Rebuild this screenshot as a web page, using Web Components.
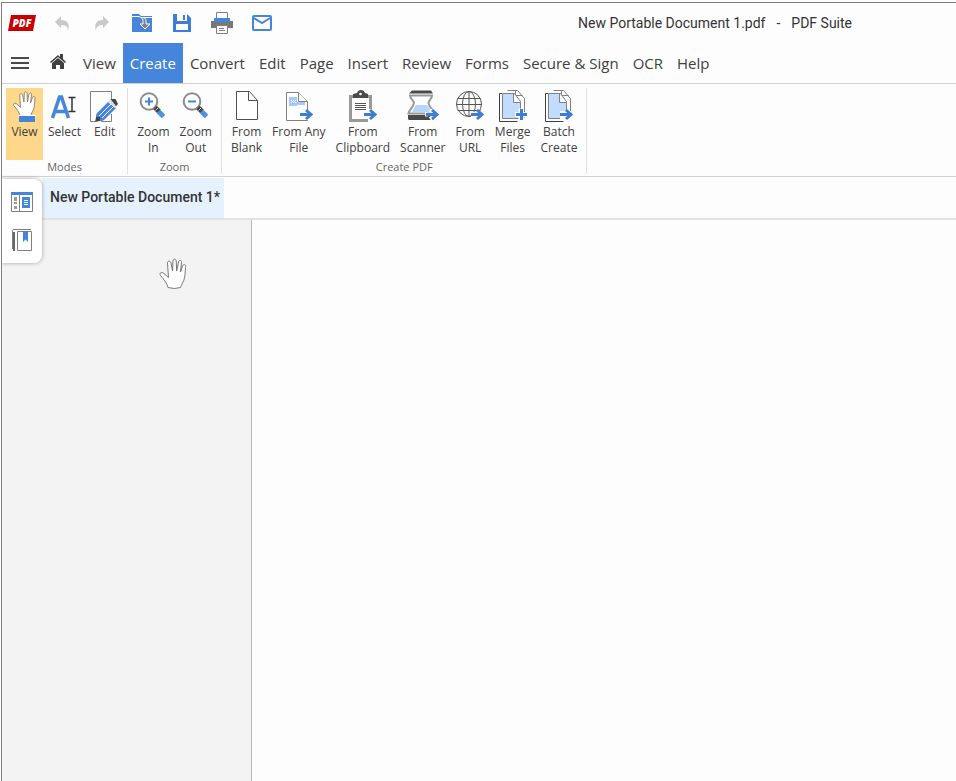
<!DOCTYPE html>
<html lang="en">
<head>
<meta charset="utf-8">
<meta name="viewport" content="width=device-width, initial-scale=1">
<title>New Portable Document 1.pdf - PDF Suite</title>
<style>
  html, body {
    height: 100%;
    margin: 0;
  }

  body {
    background: #fdfdfd;
    color: #404040;
    font-family: "Open Sans", "Noto Sans", sans-serif;
  }
</style>
</head>
<body>

<app-window>
  <title-bar slot="title" document="New Portable Document 1.pdf" app="PDF Suite">
    <icon-button icon="logo" label="PDF Suite"></icon-button>
    <icon-button icon="undo" label="Undo"></icon-button>
    <icon-button icon="redo" label="Redo"></icon-button>
    <icon-button icon="open" label="Open"></icon-button>
    <icon-button icon="save" label="Save"></icon-button>
    <icon-button icon="print" label="Print"></icon-button>
    <icon-button icon="mail" label="Send by email"></icon-button>
  </title-bar>

  <menu-bar slot="menu">
    <icon-button icon="menu" label="Menu"></icon-button>
    <icon-button icon="home" label="Home"></icon-button>
    <menu-tab>View</menu-tab>
    <menu-tab active>Create</menu-tab>
    <menu-tab>Convert</menu-tab>
    <menu-tab>Edit</menu-tab>
    <menu-tab>Page</menu-tab>
    <menu-tab>Insert</menu-tab>
    <menu-tab>Review</menu-tab>
    <menu-tab>Forms</menu-tab>
    <menu-tab>Secure &amp; Sign</menu-tab>
    <menu-tab>OCR</menu-tab>
    <menu-tab>Help</menu-tab>
  </menu-bar>

  <ribbon-bar slot="ribbon">
    <ribbon-group label="Modes">
      <ribbon-button icon="view" active>View</ribbon-button>
      <ribbon-button icon="select">Select</ribbon-button>
      <ribbon-button icon="edit">Edit</ribbon-button>
    </ribbon-group>
    <ribbon-group label="Zoom">
      <ribbon-button icon="zoomIn">Zoom<br>In</ribbon-button>
      <ribbon-button icon="zoomOut">Zoom<br>Out</ribbon-button>
    </ribbon-group>
    <ribbon-group label="Create PDF">
      <ribbon-button icon="blank">From<br>Blank</ribbon-button>
      <ribbon-button icon="anyFile">From Any<br>File</ribbon-button>
      <ribbon-button icon="clipboard">From<br>Clipboard</ribbon-button>
      <ribbon-button icon="scanner">From<br>Scanner</ribbon-button>
      <ribbon-button icon="url">From<br>URL</ribbon-button>
      <ribbon-button icon="merge">Merge<br>Files</ribbon-button>
      <ribbon-button icon="batch">Batch<br>Create</ribbon-button>
    </ribbon-group>
  </ribbon-bar>

  <document-tab slot="tabs">New Portable Document 1*</document-tab>

  <side-dock slot="dock">
    <icon-button icon="thumbnails" label="Page thumbnails"></icon-button>
    <icon-button icon="bookmarks" label="Bookmarks"></icon-button>
  </side-dock>

  <hand-cursor slot="canvas"></hand-cursor>
</app-window>

<script>
const BLUE = '#4586dc';
const GREY = '#808080';
const DARK = '#404040';

const HAND = 'M8.5 29.5C7.500 25 4 21 1 17.500C-.5 15 2 13.500 4.500 15.500L9 19.500L8 5C8 2.500 11 2.500 11.500 5L13 13L13.500 3C13.500 .5 16.500 .5 16.700 3L17.200 13L19 4C19.500 1.500 22.500 2 22 4.500L21 14L23 8C24 5.500 27 6.500 26 9.500C25.500 17 25.500 20 23.500 24C22 27 21.500 28 21 29.500Q15 31.500 8.500 29.500Z';

const ARROW = `<path d="M18 24.500h10M24 20l5 4.500-5 4.500" fill="none" stroke="#3d7dd6" stroke-width="3"/>`;

const PAGES = `
  <path d="M11.500 .5h10l7 8v19" fill="#fff" stroke="${GREY}"/>
  <path d="M19.500 .5v5h7" fill="none" stroke="${GREY}"/>
  <path d="M6 3.500H3.500v28h18" fill="none" stroke="${DARK}"/>
  <path d="M6.500 3.500h12l6 8v17h-18z" fill="#c2dcff" stroke="${GREY}"/>
  <path d="M17.500 3.500v9h7" fill="#fff" stroke="${GREY}"/>`;

const lens = sign => `
  <circle cx="13" cy="11.500" r="8.300" fill="#fff" stroke="#8c8c8c" stroke-width="2"/>
  <path d="M9 11.500h8${sign}" stroke="${BLUE}" stroke-width="2"/>
  <path d="M19 17.500l4 4" stroke="#444" stroke-width="5"/>
  <path d="M19.500 20.500l2.500-2.500" stroke="#ccc"/>
  <path d="M22.500 21.500l5 5" stroke="#4f90e4" stroke-width="5"/>`;

// [width, height, markup]
const ICONS = {
  logo: [28, 18, `
    <path d="M3 1h25l-3 16H0z" fill="#c80000"/>
    <text x="14" y="12.500" fill="#fff" font-family="Open Sans, sans-serif" font-size="10" font-weight="800" font-style="italic" text-anchor="middle">PDF</text>`],
  undo: [20, 20, `<path d="M3 9l6-6v4c7 0 9 4 7 11 0-5-3-6-7-6v3z" fill="#c9c9c9"/>`],
  redo: [20, 20, `<path d="M17 9l-6-6v4c-7 0-9 4-7 11 0-5 3-6 7-6v3z" fill="#c9c9c9"/>`],
  open: [20, 20, `
    <path d="M0 1h7l2 2h11v16H0z" fill="${BLUE}"/>
    <path d="M0 3.500h7l2 1h11" fill="none" stroke="#fff"/>
    <path d="M9 4.500c4 0 5 1 5 4V11h4l-5 5-5-5h3V8.500c0-2-.5-3-2-4z" fill="${GREY}" stroke="#fff"/>`],
  save: [18, 18, `
    <path d="M0 0h14l4 4v14H0z" fill="#3d7dd6"/>
    <path d="M4 0h10v7H4zM3 10h12v6H3z" fill="#fff"/>
    <path d="M10 1h2v5h-2z" fill="#3d7dd6"/>`],
  print: [22, 22, `
    <path d="M5.500 10V.5h11V10" fill="#fff" stroke="${GREY}"/>
    <path d="M0 9h22v7H0z" fill="#777"/>
    <path d="M3 6h16v3l-2 1H5l-2-1z" fill="${BLUE}"/>
    <path d="M5.500 13.500h11v8h-11z" fill="#fff" stroke="${GREY}"/>
    <path d="M8 16.500h5M8 18.500h6" stroke="${GREY}"/>`],
  mail: [20, 16, `
    <rect x="1" y="1" width="18" height="14" rx="1" fill="#fff" stroke="${BLUE}" stroke-width="2"/>
    <path d="M2 3l8 5 8-5" fill="none" stroke="${BLUE}" stroke-width="2"/>`],
  menu: [20, 12, `<path d="M0 1h18M0 6h18M0 11h18" stroke="#4a4a4a" stroke-width="2"/>`],
  home: [16, 20, `
    <path d="M0 9l8-7 2 2V1h3v5l3 3-1 1-7-6-7 6z" fill="${DARK}"/>
    <path d="M2 10l6-5 6 5v6h-4v-4H6v4H2z" fill="${DARK}"/>`],
  view: [34, 34, `
    <path d="${HAND}" transform="translate(5 1) scale(.84)" fill="#fff" stroke="#8c7f6d" stroke-width="1.100"/>
    <path d="M11 26h16v6H11z" fill="${BLUE}"/><path d="M10.500 25.500h17" stroke="#fff"/>`],
  select: [34, 34, `
    <path d="M4.500 28l7-21h2l7 21M7.500 21.500h10" fill="none" stroke="${BLUE}" stroke-width="3.500"/>
    <path d="M20.500 7.500h7M24 8v13M20.500 21.500h7" fill="none" stroke="#333" stroke-width="1.500"/>`],
  edit: [34, 34, `
    <path d="M23.500 10V1.500h-21v30h5M23.500 24v7.500H13" fill="none" stroke="${GREY}"/>
    <path d="M7 32l2-9 7 7z" fill="#444"/>
    <path d="M9 23L20 12l8 6-12 12-4 1 0-4-4 0z" fill="${BLUE}"/>
    <path d="M11 26l12-12M14 28l12-12" stroke="#fff"/>
    <path d="M20 12l3-3 6 6-2 3z" fill="#ddd"/>
    <path d="M22.500 9h5l2.500 5-2 2z" fill="#444"/>`],
  zoomIn: [34, 34, lens('M13 7.500v8')],
  zoomOut: [34, 34, lens('')],
  blank: [34, 34, `
    <path d="M6.500 1.500h13l8 9v19h-21z" fill="#fff" stroke="#505050"/>
    <path d="M18.500 1.500v9h9" fill="none" stroke="#505050"/>`],
  anyFile: [34, 34, `
    <path d="M4.500 2.500h12l9 9v19h-21z" fill="#fff" stroke="${GREY}"/>
    <path d="M7 7h8v5h8v3h-8v1H7z" fill="#a6c8fa"/>
    <path d="M9 10.500h5M9 12.500h5" stroke="#fff" stroke-dasharray="1 1"/>
    <path d="M10 11.500h4" stroke="#fff" stroke-dasharray="1 1"/>
    <path d="M16.500 2.500v9h9" fill="#fff" stroke="${GREY}"/>
    <path d="M17 21h10v9H17z" fill="#fff"/>${ARROW}`],
  clipboard: [34, 34, `
    <path d="M7 5H3v27h19v-3H6V8h1zM22 5h4v14h-3V8h-1z" fill="#999"/>
    <path d="M7 8V4l4-1c1-4 7-4 8 0l3 1v4z" fill="#4a4a4a"/>
    <circle cx="14.500" cy="4" r="1.300" fill="#fff"/>
    <path d="M9 13.500h11M9 15.500h11M9 17.500h11M9 19.500h11" stroke="#555"/>${ARROW}`],
  scanner: [34, 34, `
    <path d="M3 3.500l3-3h19l2 3z" fill="#4a4a4a"/>
    <path d="M4 5.500h22C26 9 23 9.500 22.500 13 23 17 27 19 28 23.500H2.500C3.500 19 7.500 17 8 13 7.500 9.500 4 9 4 5.500z" fill="#fff" stroke="#999" stroke-width="2"/>
    <path d="M10 15h11l5 7H6z" fill="#b5d5fa"/>
    <path d="M2 25h26v4l-1 1H3l-1-1z" fill="#4a4a4a"/>
    <path d="M19 24.500h3M24 20l6 4.500-6 4.500" fill="none" stroke="#fff" stroke-width="4"/>
    <g transform="translate(2 0)">${ARROW}</g>`],
  url: [34, 34, `
    <g fill="none" stroke="#555">
      <circle cx="16" cy="14" r="12.500"/>
      <ellipse cx="16" cy="14" rx="6.500" ry="12.500"/>
      <path d="M16 1.500v25M4.500 8.500h23M3.500 14.500h25M4.500 20.500h23"/>
    </g>
    <path d="M18 22h11v6H18z" fill="#fff"/>${ARROW}`],
  merge: [34, 34, `${PAGES}
    <path d="M19 24.500h12M25 18.500v12" stroke="#fff" stroke-width="5"/>
    <path d="M20 24.500h11M25.500 19v11" stroke="#3d7dd6" stroke-width="3"/>`],
  batch: [34, 34, `${PAGES}<path d="M18 21h12v8H18z" fill="#fff"/>${ARROW}`],
  thumbnails: [22, 20, `
    <path d="M.5 1v18.500h21V1M8.500 1v18" fill="#fff" stroke="${GREY}"/>
    <path d="M0 0h22v3H0z" fill="${BLUE}"/>
    <path d="M3 5h3v4H3zM3 10h3v2H3zM3 14h3v3H3z" fill="#999"/>
    <path d="M11 5h8v11h-8z" fill="${BLUE}"/>
    <path d="M13 8.500h4M13 10.500h4M13 12.500h4" stroke="#fff"/>`],
  bookmarks: [20, 22, `
    <path d="M.5 20V1.500Q.5.500 2 .5h17" fill="none" stroke="${GREY}"/>
    <path d="M1 3h2v19H1z" fill="#666"/>
    <path d="M5.500 2.500h14v19h-14z" fill="#fff" stroke="${GREY}"/>
    <path d="M11 2h5v11l-2.500-2.500L11 13z" fill="${BLUE}"/>`],
  hand: [28, 32, `<path d="${HAND}" transform="translate(.5 0)" fill="#fff" stroke="#777"/>`]
};

function icon(name) {
  const [width, height, markup] = ICONS[name];
  return `<svg width="${width}" height="${height}" viewBox="0 0 ${width} ${height}" aria-hidden="true">${markup}</svg>`;
}

const BUTTON_RESET = `
  button {
    appearance: none;
    margin: 0;
    padding: 0;
    border: 0;
    background: none;
    color: inherit;
    font: inherit;
    cursor: pointer;
  }

  svg { display: block; }
`;

class AppWindow extends HTMLElement {
  constructor() {
    super();
    this.attachShadow({mode: 'open'});
    this.shadowRoot.innerHTML = `
    <style>
      :host {
        box-sizing: border-box;
        display: flex;
        flex-direction: column;
        height: 100%;
        padding: 2px 0 0 1px;
        overflow: hidden;
      }

      #frame {
        flex: 1;
        display: flex;
        flex-direction: column;
        border: solid #808080;
        border-width: 1px 0 0 1px;
      }

      #work {
        position: relative;
        flex: 1;
        display: flex;
        flex-direction: column;
      }

      #tabs {
        display: flex;
        padding: 1px 0 0 40px;
        border-bottom: 2px solid #e2e2e2;
      }

      main {
        flex: 1;
        display: flex;
      }

      aside {
        position: relative;
        flex: 0 0 249px;
        background: #f3f3f3;
        border-right: 1px solid #b8b8b8;
      }
    </style>

    <div id="frame">
      <slot name="title"></slot>
      <slot name="menu"></slot>
      <slot name="ribbon"></slot>
      <div id="work">
        <div id="tabs"><slot name="tabs"></slot></div>
        <main>
          <aside><slot name="canvas"></slot></aside>
        </main>
        <slot name="dock"></slot>
      </div>
    </div>
    `;
  }
}

class TitleBar extends HTMLElement {
  constructor() {
    super();
    this.attachShadow({mode: 'open'});
    this.shadowRoot.innerHTML = `
    <style>
      :host {
        display: flex;
        align-items: center;
        height: 40px;
      }

      #title {
        display: flex;
        gap: 11px;
        margin-left: 296px;
        color: #333;
        font: 14px/20px Roboto, sans-serif;
        white-space: nowrap;
      }
    </style>

    <slot></slot>
    <div id="title">
      <span>${this.getAttribute('document')}</span>
      <span>-</span>
      <span>${this.getAttribute('app')}</span>
    </div>
    `;
  }
}

class IconButton extends HTMLElement {
  constructor() {
    super();
    this.attachShadow({mode: 'open'});
    this.shadowRoot.innerHTML = `
    <style>
      ${BUTTON_RESET}

      :host { display: block; }

      button {
        display: flex;
        justify-content: center;
        align-items: center;
        width: var(--button-width, 40px);
        height: var(--button-height, 40px);
      }
    </style>

    <button type="button" aria-label="${this.getAttribute('label')}">${icon(this.getAttribute('icon'))}</button>
    `;
  }
}

class MenuBar extends HTMLElement {
  constructor() {
    super();
    this.attachShadow({mode: 'open'});
    this.shadowRoot.innerHTML = `
    <style>
      :host {
        --button-width: 37px;

        display: flex;
        height: 40px;
        border-bottom: 1px solid #d0d0d0;
        font-size: 15px;
      }
    </style>

    <slot></slot>
    `;
  }
}

class MenuTab extends HTMLElement {
  constructor() {
    super();
    this.attachShadow({mode: 'open'});
    this.shadowRoot.innerHTML = `
    <style>
      ${BUTTON_RESET}

      :host { display: block; }

      :host([active]) {
        background: ${BLUE};
        color: #fff;
      }

      button {
        height: 40px;
        padding: 0 7px;
        line-height: 40px;
        white-space: nowrap;
      }
    </style>

    <button type="button"><slot></slot></button>
    `;
  }
}

class RibbonBar extends HTMLElement {
  constructor() {
    super();
    this.attachShadow({mode: 'open'});
    this.shadowRoot.innerHTML = `
    <style>
      :host {
        display: flex;
        padding: 4px 0 2px;
        border-bottom: 1px solid #d0d0d0;
        font-size: 12px;
      }
    </style>

    <slot></slot>
    `;
  }
}

class RibbonGroup extends HTMLElement {
  constructor() {
    super();
    this.attachShadow({mode: 'open'});
    this.shadowRoot.innerHTML = `
    <style>
      :host {
        display: flex;
        flex-direction: column;
        padding: 0 4px;
        border-right: 1px solid #e0e0e0;
      }

      #buttons { display: flex; }

      #label {
        color: #666;
        font-size: 11px;
        line-height: 14px;
        text-align: center;
      }
    </style>

    <div id="buttons"><slot></slot></div>
    <div id="label">${this.getAttribute('label')}</div>
    `;
  }
}

class RibbonButton extends HTMLElement {
  constructor() {
    super();
    this.attachShadow({mode: 'open'});
    this.shadowRoot.innerHTML = `
    <style>
      ${BUTTON_RESET}

      :host { display: block; }

      :host([active]) { background: #fdd88a; }

      button {
        display: flex;
        flex-direction: column;
        align-items: center;
        min-width: 37px;
        height: 72px;
        padding: 2px 5px 0;
        line-height: 16px;
        white-space: nowrap;
      }

      svg {
        flex: none;
        margin: 0 -5px;
      }
    </style>

    <button type="button">${icon(this.getAttribute('icon'))}<span><slot></slot></span></button>
    `;
  }
}

class DocumentTab extends HTMLElement {
  constructor() {
    super();
    this.attachShadow({mode: 'open'});
    this.shadowRoot.innerHTML = `
    <style>
      ${BUTTON_RESET}

      :host {
        display: block;
        background: #e5f2fd;
        color: #333;
        font: 500 14px/38px Roboto, sans-serif;
      }

      button {
        display: block;
        padding: 0 4px 2px 8px;
        white-space: nowrap;
      }
    </style>

    <button type="button"><slot></slot></button>
    `;
  }
}

class SideDock extends HTMLElement {
  constructor() {
    super();
    this.attachShadow({mode: 'open'});
    this.shadowRoot.innerHTML = `
    <style>
      :host {
        --button-height: 38px;

        position: absolute;
        top: 2px;
        left: 0;
        padding: 4px 0;
        background: #fff;
        border-radius: 0 8px 8px 0;
        box-shadow: 0 0 4px #0005;
        clip-path: inset(-4px -6px -6px 0);
      }
    </style>

    <slot></slot>
    `;
  }
}

class HandCursor extends HTMLElement {
  constructor() {
    super();
    this.attachShadow({mode: 'open'});
    this.shadowRoot.innerHTML = `
    <style>
      :host {
        position: absolute;
        top: 38px;
        left: 157px;
      }

      svg { display: block; }
    </style>

    ${icon('hand')}
    `;
  }
}

customElements.define('app-window', AppWindow);
customElements.define('title-bar', TitleBar);
customElements.define('icon-button', IconButton);
customElements.define('menu-bar', MenuBar);
customElements.define('menu-tab', MenuTab);
customElements.define('ribbon-bar', RibbonBar);
customElements.define('ribbon-group', RibbonGroup);
customElements.define('ribbon-button', RibbonButton);
customElements.define('document-tab', DocumentTab);
customElements.define('side-dock', SideDock);
customElements.define('hand-cursor', HandCursor);
</script>
</body>
</html>
